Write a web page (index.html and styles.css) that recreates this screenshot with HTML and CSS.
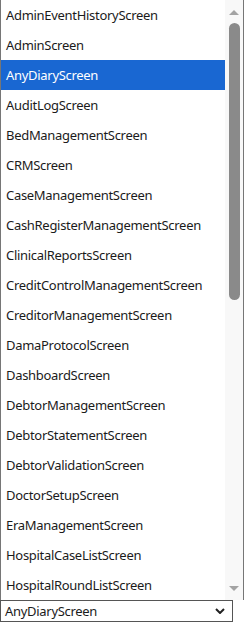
FILE: index.html
```html
<!DOCTYPE html>
<html>
<head>
<meta charset="utf-8">
<link rel="stylesheet" href="styles.css">
</head>
<body>
<div class="page">
  <div class="listbox">
    <ul class="options">
      <li>AdminEventHistoryScreen</li>
      <li>AdminScreen</li>
      <li class="selected">AnyDiaryScreen</li>
      <li>AuditLogScreen</li>
      <li>BedManagementScreen</li>
      <li>CRMScreen</li>
      <li>CaseManagementScreen</li>
      <li>CashRegisterManagementScreen</li>
      <li>ClinicalReportsScreen</li>
      <li>CreditControlManagementScreen</li>
      <li>CreditorManagementScreen</li>
      <li>DamaProtocolScreen</li>
      <li>DashboardScreen</li>
      <li>DebtorManagementScreen</li>
      <li>DebtorStatementScreen</li>
      <li>DebtorValidationScreen</li>
      <li>DoctorSetupScreen</li>
      <li>EraManagementScreen</li>
      <li>HospitalCaseListScreen</li>
      <li>HospitalRoundListScreen</li>
    </ul>
    <div class="scrollbar">
      <svg class="arrow" width="18" height="18" viewBox="0 0 18 18"><polygon points="4,15 9,10 14,15" fill="#a3a3a3"/></svg>
      <div class="track"><div class="thumb"></div></div>
      <svg class="arrow" width="18" height="18" viewBox="0 0 18 18"><polygon points="4,4 9,9 14,4" fill="#a3a3a3"/></svg>
    </div>
  </div>
  <div class="select">
    <span class="value">AnyDiaryScreen</span>
    <svg class="chevron" width="10" height="6" viewBox="0 0 10 6"><polyline points="1,1 5,5 9,1" fill="none" stroke="#222" stroke-width="2"/></svg>
  </div>
</div>
</body>
</html>
```

FILE: styles.css
```css
html, body {
  margin: 0;
  padding: 0;
  background: #fff;
}
body {
  font-family: "Noto Sans", "Open Sans", sans-serif;
  font-size: 13px;
  letter-spacing: -0.3px;
  color: #1b1b1b;
}
.page {
  width: 244px;
  height: 622px;
  overflow: hidden;
}
.listbox {
  height: 600px;
  display: flex;
  border-left: 1px solid #767676;
  border-right: 1px solid #767676;
  box-sizing: border-box;
  width: 244px;
  overflow: hidden;
}
.options {
  list-style: none;
  margin: 0;
  padding: 0;
  flex: 1;
  min-width: 0;
}
.options li {
  height: 30px;
  line-height: 30px;
  padding-left: 5px;
  white-space: nowrap;
  overflow: hidden;
}
.options li.selected {
  background: #1967d2;
  color: #fff;
}
.scrollbar {
  width: 18px;
  flex: none;
  background: #f8f8f8;
  display: flex;
  flex-direction: column;
  align-items: center;
}
.arrow {
  flex: none;
  display: block;
}
.track {
  flex: 1;
  width: 100%;
  display: flex;
  justify-content: center;
  padding-top: 5px;
  padding-left: 1px;
  box-sizing: border-box;
}
.thumb {
  width: 11px;
  height: 277px;
  background: #8a8a8a;
  border-radius: 6px;
}
.select {
  width: 233px;
  height: 22px;
  box-sizing: border-box;
  border: 1px solid #555;
  display: flex;
  align-items: center;
  justify-content: space-between;
  padding: 0 7px 0 4px;
}
.select .value {
  line-height: 20px;
}
.chevron {
  display: block;
}
```
